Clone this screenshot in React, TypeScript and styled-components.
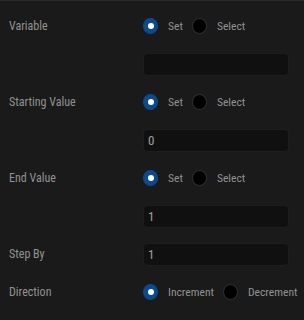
import styled, { createGlobalStyle } from 'styled-components'

const GlobalStyle = createGlobalStyle`
  html, body {
    margin: 0;
    padding: 0;
    background: #1a1a1a;
  }
  body {
    font-family: "Roboto Condensed", "Liberation Sans Narrow", Roboto, sans-serif;
  }
`

const Panel = styled.div`
  width: 304px;
  height: 320px;
  box-sizing: border-box;
  background: #1a1a1a;
  border-top: 1px solid #2a2a2a;
  padding: 6px 0 0 9px;
  display: flex;
  flex-direction: column;
`

const Row = styled.div`
  display: grid;
  grid-template-columns: 134px 1fr;
  align-items: center;
  height: 38px;
`

const Label = styled.div`
  font-size: 12px;
  color: #929292;
`

const RadioGroup = styled.div`
  display: flex;
  align-items: center;
`

const Radio = styled.span<{ $checked?: boolean }>`
  width: 15px;
  height: 16px;
  box-sizing: border-box;
  border-radius: 50%;
  display: flex;
  align-items: center;
  justify-content: center;
  background: ${({ $checked }) => ($checked ? '#0d4a8c' : '#000')};
  border: 1px solid ${({ $checked }) => ($checked ? '#0d4a8c' : '#2e2e2e')};
  margin-right: 10px;

  &::after {
    content: '';
    display: ${({ $checked }) => ($checked ? 'block' : 'none')};
    width: 6px;
    height: 6px;
    border-radius: 50%;
    background: #fff;
  }
`

const RadioText = styled.span`
  font-size: 11.6px;
  color: #929292;
  margin-right: 9px;
`

const Input = styled.div`
  width: 146px;
  height: 23px;
  box-sizing: border-box;
  background: #101010;
  border: 1px solid #1e1e1e;
  border-radius: 4px;
  padding: 0 4px;
  display: flex;
  align-items: center;
  font-size: 13px;
  color: #a0a0a0;
`

const Choice = ({ options }: { options: string[] }) => (
  <RadioGroup>
    {options.map((o, i) => (
      <span key={o} style={{ display: 'contents' }}>
        <Radio $checked={i === 0} />
        <RadioText>{o}</RadioText>
      </span>
    ))}
  </RadioGroup>
)

export default function App() {
  return (
    <>
      <GlobalStyle />
      <Panel>
        <Row>
          <Label>Variable</Label>
          <Choice options={['Set', 'Select']} />
        </Row>
        <Row>
          <span />
          <Input />
        </Row>
        <Row>
          <Label>Starting Value</Label>
          <Choice options={['Set', 'Select']} />
        </Row>
        <Row>
          <span />
          <Input>0</Input>
        </Row>
        <Row>
          <Label>End Value</Label>
          <Choice options={['Set', 'Select']} />
        </Row>
        <Row>
          <span />
          <Input>1</Input>
        </Row>
        <Row>
          <Label>Step By</Label>
          <Input>1</Input>
        </Row>
        <Row>
          <Label>Direction</Label>
          <Choice options={['Increment', 'Decrement']} />
        </Row>
      </Panel>
    </>
  )
}
